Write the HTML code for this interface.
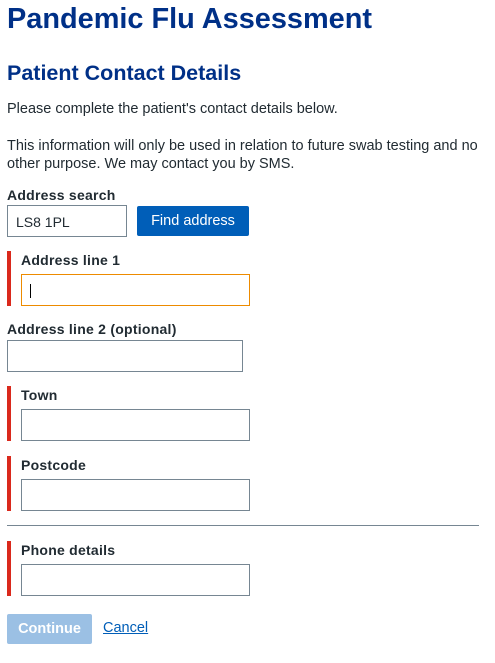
<!DOCTYPE html>
<html><head><style>
body{margin:0;width:495px;height:663px;background:#fff;font-family:"Liberation Sans",Arial,sans-serif;color:#212b32;position:relative;overflow:hidden}
.a{position:absolute;white-space:nowrap}
h1,h2{margin:0;color:#003087;font-weight:bold}
.t{font-size:14.5px;line-height:18px}
.l{font-size:14px;font-weight:bold;color:#212b32;letter-spacing:0.25px}
.in{position:absolute;box-sizing:border-box;border:1px solid #768692;background:#fff}
.bar{position:absolute;left:7px;width:4px;background:#da291c}
</style></head><body>
<h1 class="a" style="left:7px;top:1px;font-size:28.9px;line-height:36px">Pandemic Flu Assessment</h1>
<h2 class="a" style="left:7px;top:60px;font-size:21.5px;line-height:26px">Patient Contact Details</h2>
<div class="a t" style="left:7px;top:100px">Please complete the patient's contact details below.</div>
<div class="a t" style="left:7px;top:137px">This information will only be used in relation to future swab testing and no<br>other purpose. We may contact you by SMS.</div>
<div class="a l" style="left:7px;top:187px">Address search</div>
<div class="in" style="left:7px;top:205px;width:120px;height:32px;font-size:14px;padding:8px 0 0 8px">LS8 1PL</div>
<div class="a" style="left:137px;top:206px;width:112px;height:30px;background:#005eb8;border-radius:2px;color:#fff;font-size:14.5px;line-height:30px;text-align:center">Find address</div>
<div class="bar" style="top:251px;height:55px"></div>
<div class="a l" style="left:21px;top:252px">Address line 1</div>
<div class="in" style="left:21px;top:274px;width:229px;height:32px;border-color:#ed8b00"><div style="position:absolute;left:8px;top:9px;width:1px;height:14px;background:#000"></div></div>
<div class="a l" style="left:7px;top:321px">Address line 2 (optional)</div>
<div class="in" style="left:7px;top:340px;width:236px;height:32px"></div>
<div class="bar" style="top:386px;height:55px"></div>
<div class="a l" style="left:21px;top:387px">Town</div>
<div class="in" style="left:21px;top:409px;width:229px;height:32px"></div>
<div class="bar" style="top:456px;height:55px"></div>
<div class="a l" style="left:21px;top:457px">Postcode</div>
<div class="in" style="left:21px;top:479px;width:229px;height:32px"></div>
<div class="a" style="left:7px;top:525px;width:472px;height:1px;background:#768692"></div>
<div class="bar" style="top:541px;height:55px"></div>
<div class="a l" style="left:21px;top:542px">Phone details</div>
<div class="in" style="left:21px;top:564px;width:229px;height:32px"></div>
<div class="a" style="left:7px;top:614px;width:85px;height:30px;background:#9bc0e4;border-radius:2px;color:#fff;font-size:14.5px;font-weight:bold;line-height:30px;text-align:center">Continue</div>
<div class="a" style="left:103px;top:620px;font-size:14.5px;color:#005eb8;text-decoration:underline">Cancel</div>
</body></html>
